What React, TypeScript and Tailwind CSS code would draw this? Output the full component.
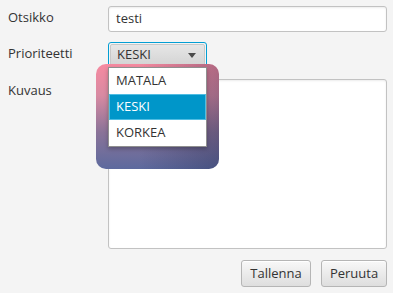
import React from "react";

const font = { fontFamily: '"Open Sans", "Noto Sans", sans-serif' };

function Label({ children }: { children: React.ReactNode }) {
    return (
        <div className="w-[108px] shrink-0 pl-2 pt-[2px] text-[13px] leading-[18px] text-[#333]">
            {children}
        </div>
    );
}

function Button({ children, width }: { children: React.ReactNode; width: string }) {
    return (
        <button
            className={`${width} h-[27px] rounded-[3px] border border-[#b5b5b5] bg-gradient-to-b from-[#f8f8f8] to-[#dedede] text-[13px] text-[#333] shadow-[inset_0_1px_0_#fff]`}
        >
            {children}
        </button>
    );
}

export default function App() {
    const options = ["MATALA", "KESKI", "KORKEA"];

    return (
        <div className="relative w-[393px] h-[293px] bg-[#f4f4f4] overflow-hidden" style={font}>
            <div className="flex flex-col pt-[6px] pr-[6px]">
                {/* Otsikko */}
                <div className="flex">
                    <Label>Otsikko</Label>
                    <div className="flex-1 h-[26px] rounded-[3px] border border-[#c2c2c2] bg-white shadow-[inset_0_1px_2px_rgba(0,0,0,0.08)] px-[7px] flex items-center text-[13px] text-[#333]">
                        testi
                    </div>
                </div>

                {/* Prioriteetti */}
                <div className="flex mt-[10px]">
                    <Label>Prioriteetti</Label>
                    <div className="w-[99px] h-[26px] rounded-[3px] border border-[#039ed3] p-[1px]">
                        <div className="h-full rounded-[2px] border border-[#c8c8c8] bg-gradient-to-b from-[#e6e6e6] to-[#d4d4d4] flex items-center justify-between pl-[6px] pr-[8px] text-[13px] text-[#333]">
                            <span>KESKI</span>
                            <span className="w-0 h-0 border-l-[4px] border-r-[4px] border-t-[5px] border-l-transparent border-r-transparent border-t-[#4a4a4a]" />
                        </div>
                    </div>
                </div>

                {/* Kuvaus */}
                <div className="flex mt-[11px]">
                    <Label>Kuvaus</Label>
                    <div className="flex-1 h-[170px] rounded-[3px] border border-[#c2c2c2] bg-white shadow-[inset_0_1px_2px_rgba(0,0,0,0.08)]" />
                </div>

                {/* Buttons */}
                <div className="flex justify-end gap-[10px] mt-[11px]">
                    <Button width="w-[70px]">Tallenna</Button>
                    <Button width="w-[66px]">Peruuta</Button>
                </div>
            </div>

            {/* Dropdown popup */}
            <div className="absolute left-[96px] top-[64px] w-[123px] h-[105px] rounded-[10px] overflow-hidden bg-[linear-gradient(to_bottom,#f68aa0_0%,#d88aa2_30%,#8a7398_65%,#5d6a9e_100%)]">
                <div className="absolute inset-0 bg-[linear-gradient(to_right,rgba(0,0,0,0)_35%,rgba(20,25,60,0.3)_100%)]" />
                <div className="absolute left-[12px] top-[3px] w-[99px] border border-[#8f8f8f] bg-white shadow-[0_2px_4px_rgba(0,0,0,0.25)]">
                    {options.map((o) => (
                        <div
                            key={o}
                            className={
                                o === "KESKI"
                                    ? "h-[26px] flex items-center pl-[6px] text-[13px] text-white bg-[#0096c9] border border-[#4fbde3]"
                                    : "h-[26px] flex items-center pl-[7px] text-[13px] text-[#333]"
                            }
                        >
                            {o}
                        </div>
                    ))}
                </div>
            </div>
        </div>
    );
}
